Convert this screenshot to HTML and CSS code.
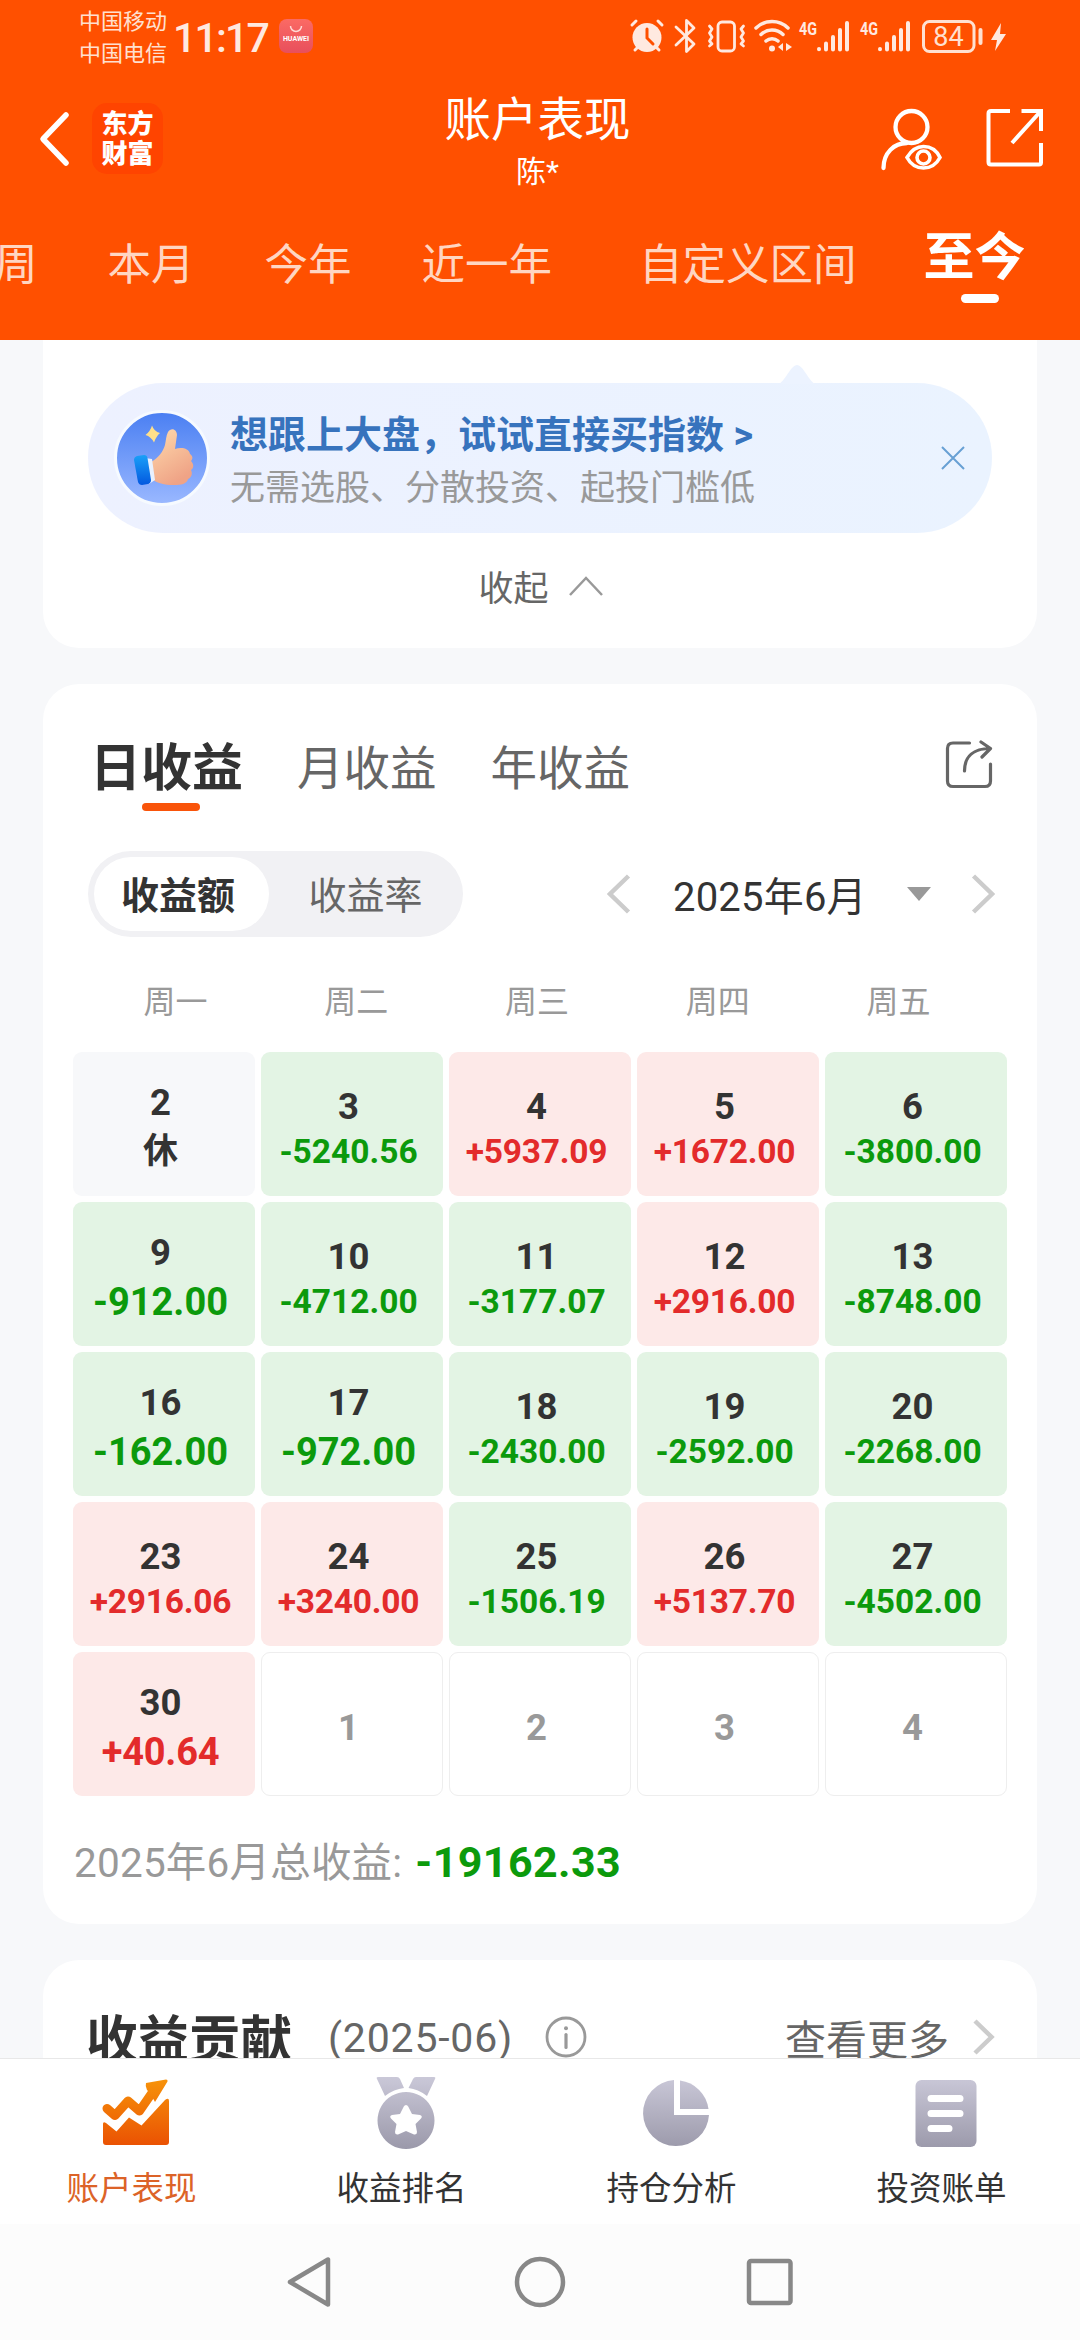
FILE: index.html
```html
<!DOCTYPE html>
<html lang="zh-CN">
<head>
    <meta charset="UTF-8">
    <meta name="viewport" content="width=device-width, initial-scale=1.0">
    <title>账户表现</title>
    <link rel="stylesheet" href="styles.css">
</head>
<body>
    <header class="header">
        <!-- Status bar -->
        <div class="status">
            <div class="carriers"><span>中国移动</span><span>中国电信</span></div>
            <span class="time">11:17</span>
            <div class="store">
                <svg width="34" height="14" viewBox="0 0 34 14" fill="none" stroke="#ffd9d5" stroke-width="1.5"><path d="M11.500 7a5.500 5.500 0 0 0 11 0"/></svg>
                <span>HUAWEI</span>
            </div>
            <svg class="status-icons" width="400" height="55" viewBox="0 0 400 55">
                <!-- alarm -->
                <g fill="none" stroke="#ffe9e0" stroke-linecap="round">
                    <circle cx="27" cy="27.500" r="14.500" fill="#ffe9e0" stroke="none"/>
                    <path d="M12 15l4-4M38 11l4 4M15 40l3-3M36 37l3 3" stroke-width="3"/>
                    <path d="M27 19v9l6 6" stroke="#ff5000" stroke-width="3"/>
                </g>
                <!-- bluetooth -->
                <path d="M56 17l18 17-7.500 7.500V10.500L74 18 56 35" fill="none" stroke="#ffe9e0" stroke-width="2.800" stroke-linejoin="round" stroke-linecap="round"/>
                <!-- vibrate -->
                <g fill="none" stroke="#ffe9e0" stroke-width="2.800" stroke-linejoin="round" stroke-linecap="round">
                    <rect x="98" y="12" width="16.500" height="29" rx="4"/>
                    <path d="M89.500 16l2.500 3-2.500 4 2.500 4-2.500 4 2.500 3-2.500 2M123.500 16l-2.500 3 2.500 4-2.500 4 2.500 4-2.500 3 2.500 2"/>
                </g>
                <!-- wifi -->
                <g fill="none" stroke="#ffe9e0" stroke-width="3.500" stroke-linecap="round">
                    <path d="M136 18a23 23 0 0 1 32 0M141 24.500a16 16 0 0 1 22 0M146 31a9 9 0 0 1 12 0"/>
                    <circle cx="152" cy="38.500" r="3" fill="#ffe9e0" stroke="none"/>
                    <path d="M163 33v8l-5-4zM166 33v8l6-4z" fill="#ffe9e0" stroke="none"/>
                </g>
                <!-- mobile signals -->
                <g fill="none" stroke="#ffe9e0" stroke-width="4" stroke-linecap="round">
                    <path d="M199 39v.300M206 33.500v6M213 27v12.500M220 20v19.500M227 13v26.500"/>
                    <path d="M260 39v.300M267 33.500v6M274 27v12.500M281 20v19.500M288 13v26.500"/>
                </g>
                <g class="net">
                    <text x="179" y="25" textLength="18" lengthAdjust="spacingAndGlyphs">4G</text>
                    <text x="240" y="25" textLength="18" lengthAdjust="spacingAndGlyphs">4G</text>
                </g>
                <!-- battery -->
                <rect x="303.500" y="11.500" width="50.500" height="30" rx="6" fill="none" stroke="#ffe0d0" stroke-width="3"/>
                <path d="M360.500 20v13" stroke="#ffe0d0" stroke-width="4" stroke-linecap="round"/>
                <text class="battery" x="328.500" y="36" text-anchor="middle">84</text>
                <path d="M381 13l-10 17h6l-2 11 11-17h-6z" fill="#ffe9e0"/>
            </svg>
        </div>

        <!-- Title bar -->
        <div class="title-bar">
            <div class="side">
                <svg class="back" width="34" height="58" viewBox="0 0 34 58" fill="none" stroke="#fff" stroke-width="5.500" stroke-linecap="round" stroke-linejoin="round"><path d="M28 5L5 29l23 24"/></svg>
                <div class="logo"><span>东方</span><span>财富</span></div>
            </div>
            <div class="title">
                <h1>账户表现</h1>
                <p>陈*</p>
            </div>
            <div class="side side-right">
                <svg width="64" height="64" viewBox="0 0 64 64" fill="none" stroke="#fff" stroke-width="4.300" stroke-linecap="round">
                    <circle cx="31.500" cy="19" r="16"/>
                    <path d="M3.500 60C3.500 45 14 35 27 35"/>
                    <path d="M27 49.500C32 41 37 38.500 43.500 38.500S56 41 60 49.500C56 57 50 60 43.500 60S31 57 27 49.500z" stroke-width="3.600"/>
                    <circle cx="43.500" cy="49.500" r="6.500" stroke-width="3.600"/>
                </svg>
                <svg width="58" height="60" viewBox="0 0 58 60" fill="none" stroke="#fff" stroke-width="4">
                    <path d="M24 3H5q-2.500 0-2.500 2.500V54q0 2.500 2.500 2.500h48q2 0 2-2V35M35.500 3H55v20M54 4L26 35"/>
                </svg>
            </div>
        </div>

        <nav class="periods">
            <a>周</a>
            <a>本月</a>
            <a>今年</a>
            <a>近一年</a>
            <a class="custom">自定义区间</a>
            <a class="current">至今</a>
        </nav>
    </header>

    <main class="content">
        <section class="card tip-card">
            <div class="tip">
                <svg class="tip-arrow" width="40" height="20" viewBox="0 0 40 20"><path d="M2 20C9 16 14 1 20 1s11 15 18 19z" fill="#ecf3ff"/></svg>
                <svg class="thumb" width="96" height="96" viewBox="0 0 96 96">
                    <defs>
                        <linearGradient id="sky" x1="0" y1="0" x2="0" y2="1"><stop offset="0" stop-color="#4a7ff2"/><stop offset="1" stop-color="#9ab8ff"/></linearGradient>
                        <linearGradient id="skin" x1="0" y1="0" x2="0.500" y2="1"><stop offset="0" stop-color="#ffdcae"/><stop offset="1" stop-color="#efa386"/></linearGradient>
                        <linearGradient id="cuff" x1="0" y1="0" x2="0" y2="1"><stop offset="0" stop-color="#1aa0f8"/><stop offset="1" stop-color="#0358df"/></linearGradient>
                    </defs>
                    <circle cx="48" cy="48" r="46.500" fill="url(#sky)" stroke="#f6faff" stroke-width="3"/>
                    <path d="M38 15.500q2 6 8 7.500l-2 2q-3 4-4 7.500-3-6-8.500-7.500 5-4 6.500-9.500z" fill="#ffe08a"/>
                    <path d="M37 52c7-4 12-10 14-17 1-5 1-9 3-13 3-5 9-3 9 3l-2 14c6-2 14-1 15 5 3 2 3 5 1 7 3 3 3 7 0 9 2 4 0 8-3 9-1 5-7 6-14 6-10 0-17-2-22-6z" fill="url(#skin)"/>
                    <path d="M31 48l7 1 3 21-6 4z" fill="#e8f1ff"/>
                    <path d="M20 50q0-3 3-4l7-1q3 0 3.500 3L37 70q0 3-3 4l-6 1q-3 0-4-3z" fill="url(#cuff)"/>
                </svg>
                <div class="tip-text">
                    <strong>想跟上大盘，试试直接买指数 &gt;</strong>
                    <span>无需选股、分散投资、起投门槛低</span>
                </div>
                <svg width="24" height="24" viewBox="0 0 24 24" stroke="#68a0d4" stroke-width="2"><path d="M1 1l22 22M23 1L1 23"/></svg>
            </div>
            <div class="collapse">
                <span>收起</span>
                <svg width="34" height="20" viewBox="0 0 34 20" fill="none" stroke="#999" stroke-width="2.500"><path d="M1 19L17 2l16 17"/></svg>
            </div>
        </section>

        <section class="card profit">
            <div class="profit-tabs">
                <a class="on">日收益</a>
                <a>月收益</a>
                <a>年收益</a>
                <svg class="share" width="48" height="50" viewBox="0 0 48 50" fill="none" stroke="#666" stroke-width="3.200" stroke-linecap="round" stroke-linejoin="round">
                    <path d="M24.500 4H8Q2.500 4 2.500 9.500V42q0 5.500 5.500 5.500h32q5.500 0 5.500-5.500V25"/>
                    <path d="M19.500 32C19.500 17 29 9.500 45 9.500M36 3l9.500 6.500L37 18"/>
                </svg>
            </div>

            <div class="toolbar">
                <div class="switch">
                    <span class="on">收益额</span>
                    <span>收益率</span>
                </div>
                <div class="month">
                    <svg width="24" height="40" viewBox="0 0 24 40" fill="none" stroke="#ccc" stroke-width="4.500"><path d="M21.500 2L3 20l18.500 18"/></svg>
                    <span>2025年6月</span>
                    <i class="caret"></i>
                    <svg width="24" height="40" viewBox="0 0 24 40" fill="none" stroke="#ccc" stroke-width="4.500"><path d="M2.500 2L21 20 2.500 38"/></svg>
                </div>
            </div>

            <div class="weekdays">
                <span>周一</span><span>周二</span><span>周三</span><span>周四</span><span>周五</span>
            </div>

            <div class="calendar">
                <div class="day rest"><b>2</b><em>休</em></div>
                <div class="day down"><b>3</b><em>-5240.56</em></div>
                <div class="day up"><b>4</b><em>+5937.09</em></div>
                <div class="day up"><b>5</b><em>+1672.00</em></div>
                <div class="day down"><b>6</b><em>-3800.00</em></div>

                <div class="day down short"><b>9</b><em>-912.00</em></div>
                <div class="day down"><b>10</b><em>-4712.00</em></div>
                <div class="day down"><b>11</b><em>-3177.07</em></div>
                <div class="day up"><b>12</b><em>+2916.00</em></div>
                <div class="day down"><b>13</b><em>-8748.00</em></div>

                <div class="day down short"><b>16</b><em>-162.00</em></div>
                <div class="day down short"><b>17</b><em>-972.00</em></div>
                <div class="day down"><b>18</b><em>-2430.00</em></div>
                <div class="day down"><b>19</b><em>-2592.00</em></div>
                <div class="day down"><b>20</b><em>-2268.00</em></div>

                <div class="day up"><b>23</b><em>+2916.06</em></div>
                <div class="day up"><b>24</b><em>+3240.00</em></div>
                <div class="day down"><b>25</b><em>-1506.19</em></div>
                <div class="day up"><b>26</b><em>+5137.70</em></div>
                <div class="day down"><b>27</b><em>-4502.00</em></div>

                <div class="day up short"><b>30</b><em>+40.64</em></div>
                <div class="day next"><b>1</b></div>
                <div class="day next"><b>2</b></div>
                <div class="day next"><b>3</b></div>
                <div class="day next"><b>4</b></div>
            </div>

            <div class="total"><span>2025年6月总收益:</span><strong>-19162.33</strong></div>
        </section>

        <section class="card contribution">
            <h2>收益贡献</h2>
            <span class="range">(2025-06)</span>
            <svg class="info" width="42" height="42" viewBox="0 0 42 42" fill="none" stroke="#999" stroke-width="2.800" stroke-linecap="round">
                <circle cx="21" cy="21" r="19"/>
                <path d="M21 18.500v13" stroke-width="3.200"/>
                <circle cx="21" cy="12.300" r="2" fill="#999" stroke="none"/>
            </svg>
            <span class="more">查看更多</span>
            <svg width="22" height="36" viewBox="0 0 22 36" fill="none" stroke="#ccc" stroke-width="4.500"><path d="M2 2l16.500 16L2 34"/></svg>
        </section>
    </main>

    <!-- Bottom tabs -->
    <footer class="tabbar">
        <a class="on">
            <svg width="72" height="76" viewBox="0 0 72 76">
                <defs>
                    <linearGradient id="fire" gradientUnits="userSpaceOnUse" x1="0" y1="4" x2="0" y2="70"><stop offset="0" stop-color="#f7930a"/><stop offset="1" stop-color="#ea5203"/></linearGradient>
                    <linearGradient id="steel" gradientUnits="userSpaceOnUse" x1="0" y1="2" x2="0" y2="74"><stop offset="0" stop-color="#cac8d8"/><stop offset="1" stop-color="#9b99aa"/></linearGradient>
                </defs>
                <path d="M7 33.500l8 7L28 26l11.500 10L54 15" fill="none" stroke="url(#fire)" stroke-width="9" stroke-linecap="round" stroke-linejoin="round"/>
                <path d="M46 8l20-3.500q2 0 1.500 2L55 27l-5-9-3-3q-2-4-1-7z" fill="url(#fire)"/>
                <path d="M3 49q0-3 3-1l10.500 8.500L29 42.500l12.500 8L65 25q4-3 4 1v41q0 3-3 3H6q-3 0-3-3z" fill="url(#fire)"/>
            </svg>
            <span>账户表现</span>
        </a>
        <a>
            <svg width="72" height="76" viewBox="0 0 72 76" fill="url(#steel)">
                <path d="M8 2h19q2 0 3 2l4 9Q24 14 15 21L7 4q-1-2 1-2zM64 2H46q-2 0-3 2l-4.500 9Q48 14 57 21L65 4q1-2-1-2z"/>
                <path fill-rule="evenodd" d="M36 17a28.500 28.500 0 1 0 .01 0zM36 30q1.500 0 2.200 1.500l3.800 7.500 8 1q3 1 1 3.500L45.500 49l1.500 8q0 3-3 2.500L36 56l-8 3.500q-3 .5-3-2.500l1.500-8-5.500-5.500q-2-2.500 1-3.500l8-1 3.800-7.500Q34.500 30 36 30z"/>
            </svg>
            <span>收益排名</span>
        </a>
        <a>
            <svg width="72" height="76" viewBox="0 0 72 76" fill="url(#steel)">
                <path d="M34 5.100A33 33 0 1 0 69 40H34z"/>
                <path d="M40 5.500A33 33 0 0 1 68.500 34H40z"/>
            </svg>
            <span>持仓分析</span>
        </a>
        <a>
            <svg width="72" height="76" viewBox="0 0 72 76" fill="url(#steel)">
                <rect x="5.500" y="5" width="61" height="67" rx="6"/>
                <path d="M21 23.500h29M21 38.500h29M21 53.500h18" stroke="#fff" stroke-width="7" stroke-linecap="round"/>
            </svg>
            <span>投资账单</span>
        </a>
    </footer>

    <div class="system-nav">
        <svg width="50" height="54" viewBox="0 0 50 54"><path d="M5 27L43 4.500v45z"/></svg>
        <svg width="54" height="54" viewBox="0 0 54 54"><circle cx="27" cy="27" r="23"/></svg>
        <svg width="50" height="54" viewBox="0 0 50 54"><rect x="4" y="6" width="41.500" height="42" rx="2"/></svg>
    </div>
</body>
</html>
```
FILE: styles.css
```css
* {
    box-sizing: border-box;
}
body {
    width: 1080px;
    height: 2340px;
    margin: 0;
    overflow: hidden;
    display: flex;
    flex-direction: column;
    background-color: #f7f8fa;
    color: #333;
    font-family: Roboto, "Noto Sans CJK SC", sans-serif;
}
h1, h2, p {
    margin: 0;
    font-weight: normal;
}
svg {
    display: block;
    flex: none;
}

/* Header */
.header {
    height: 340px;
    flex: none;
    background-color: #ff5000;
    color: #fff;
    overflow: hidden;
}
.status {
    height: 76px;
    display: flex;
    align-items: flex-start;
    padding-left: 79px;
    color: #ffe0d0;
}
.carriers {
    display: flex;
    flex-direction: column;
    width: 94px;
    padding-top: 6px;
    font-size: 22px;
    line-height: 31.5px;
}
.time {
    width: 106px;
    padding-top: 14px;
    font-size: 41px;
    line-height: 48px;
    font-weight: 500;
    letter-spacing: -1.8px;
    color: #ffe9e0;
}
.store {
    width: 34px;
    height: 34px;
    margin-top: 19px;
    border-radius: 8px;
    background: linear-gradient(#fb6a64, #e84f5c);
    text-align: center;
}
.store span {
    display: block;
    font-size: 7px;
    line-height: 12px;
    font-weight: bold;
    color: #fff;
}
.status-icons {
    margin: 10px 0 0 307px;
}
.net {
    fill: #ffe9e0;
    font-size: 19px;
    font-weight: bold;
}
.battery {
    fill: #ffe0d0;
    font-size: 27px;
}
.title-bar {
    height: 128px;
    display: flex;
    justify-content: space-between;
    padding: 0 36px 0 38px;
}
.side {
    width: 240px;
    display: flex;
    align-items: flex-start;
}
.back {
    margin: 34px 20px 0 0;
}
.logo {
    width: 71px;
    height: 71px;
    margin-top: 27px;
    padding-top: 6px;
    display: flex;
    flex-direction: column;
    align-items: center;
    border-radius: 15px;
    background-color: #ff4400;
    font-size: 26px;
    line-height: 30px;
    font-weight: 900;
}
.title {
    padding-right: 7px;
    text-align: center;
}
.title h1 {
    padding-top: 13px;
    font-size: 46.5px;
    line-height: 62px;
}
.title p {
    font-size: 30px;
    line-height: 42px;
}
.side-right {
    justify-content: flex-end;
    gap: 42px;
    padding-top: 32px;
}
.periods {
    display: flex;
    align-items: center;
    gap: 70px;
    height: 114px;
    margin-left: -6px;
    white-space: nowrap;
    font-size: 43.5px;
    color: #ffd6c2;
}
.periods .custom {
    margin-left: 17px;
}
.periods .current {
    position: relative;
    top: -8px;
    margin-left: -3px;
    font-size: 51px;
    font-weight: bold;
    color: #fff;
}
.periods .current::after {
    content: "";
    position: absolute;
    left: 37px;
    bottom: -13px;
    width: 38px;
    height: 9px;
    border-radius: 5px;
    background-color: #fff;
}

/* Cards */
.content {
    flex: 1;
    min-height: 0;
    overflow: hidden;
    padding: 0 43px;
}
.card {
    background-color: #fff;
    border-radius: 36px;
}
.tip-card {
    height: 308px;
    margin-bottom: 36px;
    padding: 43px 45px 0;
    border-radius: 0 0 36px 36px;
}
.tip {
    position: relative;
    height: 150px;
    display: flex;
    align-items: center;
    padding: 0 27px 0 26px;
    border-radius: 75px;
    background: linear-gradient(90deg, #edf1ff, #eaf3ff);
}
.tip-arrow {
    position: absolute;
    left: 689px;
    top: -19px;
}
.tip-text {
    flex: 1;
    padding: 8px 0 0 20px;
    display: flex;
    flex-direction: column;
}
.tip-text strong {
    font-size: 38px;
    line-height: 54px;
    color: #3773bd;
}
.tip-text span {
    font-size: 35px;
    line-height: 54px;
    color: #999;
}
.collapse {
    display: flex;
    justify-content: center;
    align-items: center;
    gap: 20px;
    height: 105px;
    padding-left: 1px;
    font-size: 35px;
    color: #666;
}
.profit {
    height: 1240px;
    padding-top: 41px;
}
.profit-tabs {
    height: 78px;
    display: flex;
    align-items: center;
    padding: 0 44px 0 47px;
    font-size: 46.5px;
    color: #666;
}
.profit-tabs a {
    margin-right: 54px;
}
.profit-tabs .on {
    position: relative;
    font-size: 51px;
    font-weight: bold;
    color: #333;
}
.profit-tabs .on::after {
    content: "";
    position: absolute;
    left: 52px;
    bottom: -10px;
    width: 58px;
    height: 8px;
    border-radius: 4px;
    background-color: #f9540a;
}
.share {
    margin-left: auto;
}
.toolbar {
    display: flex;
    justify-content: space-between;
    align-items: center;
    margin-top: 48px;
    padding: 0 42px 0 45px;
}
.switch {
    display: flex;
    width: 375px;
    height: 86px;
    padding: 6px;
    border-radius: 43px;
    background-color: #f1f1f4;
    font-size: 38px;
    line-height: 78px;
    color: #666;
}
.switch span {
    flex: 1;
    padding-left: 5px;
    text-align: center;
}
.switch .on {
    flex: none;
    width: 175px;
    padding: 0 7px 0 0;
    border-radius: 37px;
    background-color: #fff;
    font-weight: bold;
    color: #333;
}
.month {
    display: flex;
    align-items: center;
    width: 388px;
    font-size: 40px;
}
.month span {
    margin: 0 40px 0 42px;
    white-space: nowrap;
    letter-spacing: 0.2px;
}
.caret {
    margin-right: auto;
    border: 12px solid transparent;
    border-top: 14px solid #999;
    border-bottom: 0;
}
.weekdays {
    display: grid;
    grid-template-columns: repeat(5, 1fr);
    padding: 0 48px 0 42px;
    height: 115px;
    line-height: 131px;
    text-align: center;
    font-size: 32px;
    color: #999;
}
.calendar {
    display: grid;
    grid-template-columns: repeat(5, 182px);
    grid-auto-rows: 144px;
    gap: 6px;
    padding-left: 30px;
}
.day {
    display: flex;
    flex-direction: column;
    justify-content: center;
    align-items: center;
    padding: 7px 7px 0 0;
    border-radius: 9px;
}
.day b {
    font-size: 36.5px;
    line-height: 48px;
}
.day em {
    font-size: 33.5px;
    line-height: 42px;
    font-style: normal;
    font-weight: bold;
}
.rest em, .short em {
    font-size: 38px;
    line-height: 50px;
}
.rest em {
    font-size: 35px;
}
.rest {
    background-color: #f7f8fa;
}
.up {
    background-color: #fde9e8;
}
.up em {
    color: #e32b2b;
    letter-spacing: -0.2px;
}
.down {
    background-color: #e3f4e4;
}
.down em {
    color: #0c9a0c;
}
.next {
    border: 1px solid #eee;
    color: #999;
}
.total {
    display: flex;
    align-items: baseline;
    gap: 13px;
    padding: 36px 0 0 31px;
    font-size: 40.5px;
    line-height: 60px;
    letter-spacing: 0.2px;
    color: #999;
}
.total strong {
    font-size: 43px;
    letter-spacing: 0.4px;
    color: #0c9a0c;
}
.contribution {
    display: flex;
    align-items: center;
    height: 200px;
    margin-top: 36px;
    padding: 0 42px 46px 43px;
    font-size: 41px;
    color: #666;
}
.contribution h2 {
    padding-bottom: 3px;
    font-size: 51.5px;
    font-weight: bold;
    color: #333;
}
.range {
    margin-left: 36px;
    padding-top: 2px;
    letter-spacing: 0.8px;
}
.info {
    margin-left: 32px;
}
.more {
    margin: 0 24px 0 auto;
}

/* Bottom tabs */
.tabbar {
    height: 166px;
    flex: none;
    display: flex;
    border-top: 1px solid #e8e8e8;
    background-color: #fff;
}
.tabbar a {
    flex: 1;
    padding: 16px 0 0 1px;
    display: flex;
    flex-direction: column;
    align-items: center;
    font-size: 32.5px;
    line-height: 48px;
}
.tabbar span {
    margin: 14px 8px 0 0;
}
.tabbar .on {
    color: #dc6328;
}
.system-nav {
    height: 116px;
    flex: none;
    display: flex;
    justify-content: center;
    gap: 178px;
    padding-top: 31px;
    background-color: #fcfcfc;
}
.system-nav svg {
    fill: none;
    stroke: #888;
    stroke-width: 4.5;
    stroke-linejoin: round;
}
```
